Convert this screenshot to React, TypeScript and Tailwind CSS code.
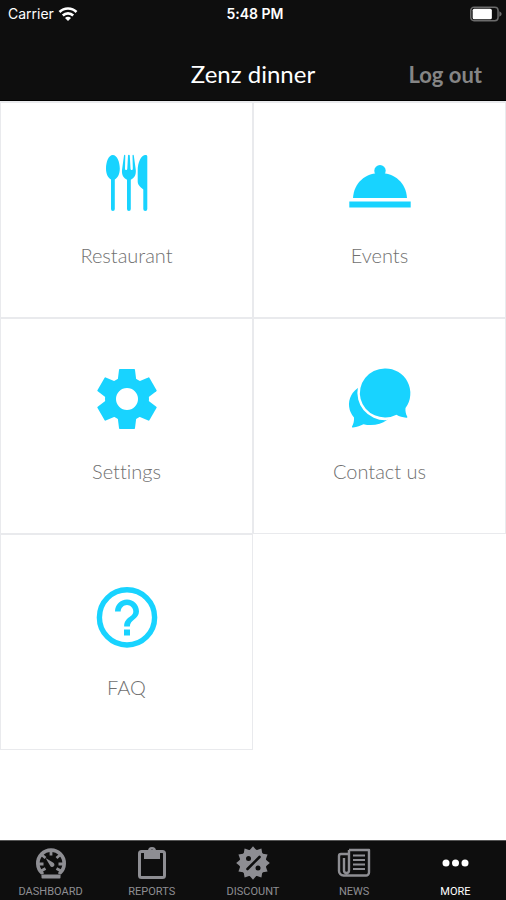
import { useState } from "react";

const RestaurantIcon = () => (
  <svg viewBox="0 0 60 60" className="w-15 h-15" fill="currentColor" aria-hidden="true">
    <path d="M15.8 2C11.6 2 9 9 9 15.500c0 5.500 2 9.300 5 11V56a1.900 1.900 0 0 0 3.800 0V26.500c3-1.700 5-5.500 5-11C22.800 9 20 2 15.800 2z" />
    <path d="M27 2.500L25 17c-.4 5 1.600 8.300 5 9.700V56a1.900 1.900 0 0 0 3.800 0V26.700c3.400-1.400 5.400-4.700 5-9.700l-2-14.500c-.2-1-1.300-1-1.300 0l.3 13c0 2-2.200 2-2.300 0L32.800 2.500c0-1-1.800-1-1.800 0l-.7 13c-.1 2-2.300 2-2.300 0l.3-13c0-1-1.100-1-1.300 0z" />
    <path d="M50.300 3.500v52.500a2 2 0 0 1-4 0V36.500c-2-2-5.600-4-5.600-8V18C40.700 9 44 2.800 48 2c1.500-.3 2.300.3 2.300 1.500z" />
  </svg>
);

const EventsIcon = () => (
  <svg viewBox="0 0 60 60" className="w-15 h-15 overflow-visible" fill="currentColor" aria-hidden="true">
    <circle cx="30" cy="17.700" r="5.700" />
    <path d="M3 45C4 30 15 20 30 20s26 10 27 25z" />
    <path d="M-.7 48.500h61.400v6H-.7z" />
  </svg>
);

const SettingsIcon = () => (
  <svg viewBox="-30 -30 60 60" className="w-15 h-15 overflow-visible" fill="currentColor" aria-hidden="true">
    <circle r="16.500" fill="none" stroke="currentColor" strokeWidth="11" />
    {[0, 60, 120, 180, 240, 300].map((angle) => (
      <path
        key={angle}
        transform={`rotate(${angle})`}
        d="M-9.500-17L-8-29.200q.1-.8.800-.8H7.200q.7 0 .8.800L9.500-17z"
      />
    ))}
  </svg>
);

const ContactIcon = () => (
  <svg viewBox="0 0 60 60" className="w-15 h-15 overflow-visible" fill="currentColor" aria-hidden="true">
    <path d="M22 15A22 20.500 0 0 0 4 48.500C4.300 51.500 3.500 55 2 57.500c-.3.800.3 1.200 1 1 4-.5 7.500-1.700 10.500-3.300A25 21 0 0 0 42 46z" />
    <path
      d="M34.700-.5a25 24.500 0 1 0 11.800 46.200c3 1.700 6 2.600 9.700 3 1 .1 1.400-.5 1-1.300-1.500-2.600-2-5.500-1.700-8.400A24.800 24.800 0 0 0 34.700-.5z"
      stroke="white"
      strokeWidth="5"
      paintOrder="stroke"
    />
  </svg>
);

const FaqIcon = () => (
  <svg viewBox="2 1.200 20 20" className="w-15 h-15 overflow-visible" fill="currentColor" aria-hidden="true">
    <circle cx="12" cy="12" r="9.200" fill="none" stroke="currentColor" strokeWidth="1.800" />
    <path d="M11 16h2v2h-2zM12 6c-2.210 0-4 1.790-4 4h1.900c0-1.100 1-2.100 2.100-2.100s2.100 1 2.100 2.100c0 2-3.050 1.750-3.050 5h1.900c0-2.250 3.050-2.500 3.050-5 0-2.210-1.790-4-4-4z" />
  </svg>
);

const DashboardIcon = () => (
  <svg viewBox="0 0 32 32" className="w-8 h-8" aria-hidden="true">
    <path d="M7 26A13.200 13.200 0 1 1 25 26" fill="none" stroke="currentColor" strokeWidth="3.600" strokeLinecap="round" />
    <path
      d="M16 4v4.500M7 8l3.500 3M25 8l-3.500 3M3.500 17H8.500M23.500 17h5M6 24l4.500-2.500M26 24l-4.500-2.500"
      stroke="currentColor"
      strokeWidth="2.800"
    />
    <path d="M10.500 11l7.500 4.500a2.300 2.300 0 1 1-3 3z" fill="currentColor" />
    <rect x="6.500" y="27.500" width="19" height="4" rx=".8" fill="currentColor" stroke="#0e0e0e" strokeWidth="1" paintOrder="stroke" />
  </svg>
);

const ReportsIcon = () => (
  <svg viewBox="0 0 32 32" className="w-8 h-8" aria-hidden="true">
    <rect x="3.500" y="4.500" width="25" height="26" rx="2" fill="none" stroke="currentColor" strokeWidth="3" />
    <path
      fillRule="evenodd"
      d="M8 4h4a4 4 0 0 1 8 0h4v8H8zM16 2.600a1.700 1.700 0 1 0 0 3.400 1.700 1.700 0 0 0 0-3.400z"
      fill="currentColor"
    />
  </svg>
);

const DiscountIcon = () => (
  <svg viewBox="-16 -16 32 32" className="w-8 h-8 overflow-visible" aria-hidden="true">
    <g fill="currentColor">
      <circle r="13.500" />
      {[0, 30, 60, 90, 120, 150, 180, 210, 240, 270, 300, 330].map((angle) => (
        <path key={angle} transform={`rotate(${angle})`} d="M-4-12L0-16.800 4-12z" />
      ))}
    </g>
    <path d="M-5.500 6L6.500-6" stroke="#0e0e0e" strokeWidth="2.600" strokeLinecap="round" />
    <circle cx="-4.500" cy="-4.500" r="2.500" fill="#0e0e0e" />
    <circle cx="5" cy="5" r="2.500" fill="#0e0e0e" />
  </svg>
);

const NewsIcon = () => (
  <svg viewBox="0 0 32 32" className="w-8 h-8 overflow-visible" fill="none" stroke="currentColor" aria-hidden="true">
    <path
      d="M11 3H31v22.500a3 3 0 0 1-3 3H5.500a4.500 4.500 0 0 1-4.500-4.500V9a2 2 0 0 1 2-2h8M11 3v20.500a2.500 2.500 0 0 1-5 0V11"
      strokeWidth="2.400"
      strokeLinejoin="round"
    />
    <path d="M15 8.500h12M15 13h12M15 17.500h12M15 22h12" strokeWidth="2.200" />
  </svg>
);

const MoreIcon = () => (
  <svg viewBox="0 0 32 32" className="w-8 h-8" fill="currentColor" aria-hidden="true">
    <circle cx="7" cy="16" r="3.500" />
    <circle cx="16.500" cy="16" r="3.500" />
    <circle cx="26" cy="16" r="3.500" />
  </svg>
);

const menu = [
  { title: "Restaurant", icon: <RestaurantIcon /> },
  { title: "Events", icon: <EventsIcon /> },
  { title: "Settings", icon: <SettingsIcon /> },
  { title: "Contact us", icon: <ContactIcon /> },
  { title: "FAQ", icon: <FaqIcon /> },
];

const tabs = [
  { title: "DASHBOARD", icon: <DashboardIcon /> },
  { title: "REPORTS", icon: <ReportsIcon /> },
  { title: "DISCOUNT", icon: <DiscountIcon /> },
  { title: "NEWS", icon: <NewsIcon /> },
  { title: "MORE", icon: <MoreIcon /> },
];

const StatusBar = () => (
  <div className="grid grid-cols-3 items-center h-7 pl-2 pr-1 text-white text-sm font-['Inter',sans-serif]">
    <div className="flex items-center gap-1">
      <span>Carrier</span>
      <svg viewBox="0 0 20 15" className="w-5 h-4" fill="none" stroke="currentColor" strokeWidth="2.600" aria-hidden="true">
        <path d="M1.500 5.500a12 12 0 0 1 17 0M4.800 9a7.400 7.400 0 0 1 10.400 0" />
        <path d="M10 14.500l-3-3a4.200 4.200 0 0 1 6 0z" fill="currentColor" stroke="none" />
      </svg>
    </div>
    <div className="text-center font-semibold">5:48 PM</div>
    <div className="flex justify-end">
      <svg viewBox="0 0 30 14" className="w-8 h-4" aria-hidden="true">
        <rect x=".7" y=".7" width="25.600" height="12.600" rx="3" fill="none" stroke="#6b6b6b" strokeWidth="1.400" />
        <rect x="2.500" y="2" width="18" height="10" rx="1.500" fill="white" />
        <path d="M27.500 4.500q2.200 1 2.200 2.500t-2.200 2.500z" fill="#6b6b6b" />
      </svg>
    </div>
  </div>
);

export default function App() {
  const [active, setActive] = useState("MORE");

  return (
    <div className="min-h-screen flex flex-col bg-white font-['Lato',sans-serif] [font-variant-ligatures:none]">
      <header className="bg-[#0e0e0e] pb-2 border-b border-black">
        <StatusBar />
        <div className="grid grid-cols-[1fr_auto_1fr] items-center h-16 pt-7 px-6">
          <h1 className="col-start-2 text-2xl text-white">Zenz dinner</h1>
          <button className="justify-self-end text-[22px] font-bold text-[#858585]">Log out</button>
        </div>
      </header>

      <main className="flex-1">
        <div className="grid grid-cols-2 border-t border-[#e9eaed]">
          {menu.map((item) => (
            <button
              key={item.title}
              className="flex flex-col items-center h-54 pt-[50px] border border-[#e9eaed] text-[#18d3ff]"
            >
              {item.icon}
              <span className="mt-7 text-xl font-light text-[#707070]">{item.title}</span>
            </button>
          ))}
        </div>
      </main>

      <nav className="grid grid-cols-5 bg-[#0e0e0e] h-15 border-t border-[#555555] pt-1.5">
        {tabs.map((tab) => (
          <button
            key={tab.title}
            onClick={() => setActive(tab.title)}
            className={`flex flex-col items-center gap-1 ${
              active === tab.title ? "text-white" : "text-[#8e8e93]"
            }`}
          >
            {tab.icon}
            <span className="text-[11px] leading-[18px] font-['Roboto',sans-serif]">{tab.title}</span>
          </button>
        ))}
      </nav>
    </div>
  );
}
